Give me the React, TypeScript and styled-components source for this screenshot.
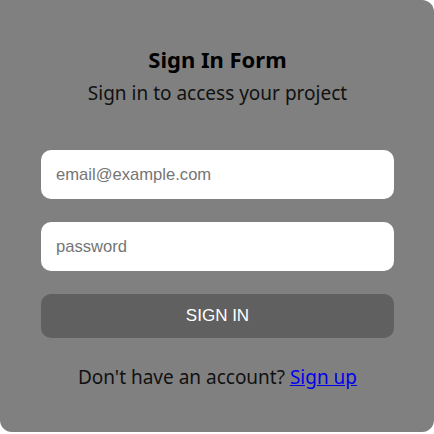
import React from "react";
import styled, { createGlobalStyle } from "styled-components";

const Global = createGlobalStyle`
  html, body { margin: 0; padding: 0; background: #ffffff; }
  * { box-sizing: border-box; }
`;

const Card = styled.div`
  width: 434px;
  height: 432px;
  background: #808080;
  border-radius: 0 12px 12px 12px;
  padding: 43px 40px 0 41px;
  display: flex;
  flex-direction: column;
  align-items: stretch;
  font-family: "Noto Sans", sans-serif;
`;

const Title = styled.h1`
  margin: 0;
  text-align: center;
  font-size: 22px;
  font-weight: 700;
  line-height: 32px;
  color: #000;
`;

const Subtitle = styled.p`
  margin: 4px 0 0;
  text-align: center;
  font-size: 19px;
  line-height: 28px;
  color: #111;
`;

const Form = styled.form`
  margin-top: 43px;
  display: flex;
  flex-direction: column;
  gap: 23px;
`;

const Input = styled.input`
  height: 49px;
  border: none;
  border-radius: 10px;
  background: #fff;
  padding: 0 15px;
  font-family: "Liberation Sans", Arial, sans-serif;
  font-size: 16.6px;
  color: #333;
  outline: none;
  &::placeholder { color: #757575; }
`;

const Button = styled.button`
  height: 44px;
  border: none;
  border-radius: 10px;
  background: #606060;
  color: #fff;
  font-family: "Liberation Sans", Arial, sans-serif;
  font-size: 17px;
  cursor: pointer;
`;

const Footer = styled.p`
  margin: 25px 0 0;
  text-align: center;
  font-size: 19px;
  line-height: 28px;
  color: #111;
`;

const Link = styled.a`
  color: #0000ee;
  text-decoration: underline;
`;

export default function App() {
  return (
    <>
      <Global />
      <Card>
        <Title>Sign In Form</Title>
        <Subtitle>Sign in to access your project</Subtitle>
        <Form onSubmit={(e) => e.preventDefault()}>
          <Input type="email" placeholder="email@example.com" />
          <Input type="password" placeholder="password" />
          <Button type="submit">SIGN IN</Button>
        </Form>
        <Footer>
          Don't have an account? <Link href="#">Sign up</Link>
        </Footer>
      </Card>
    </>
  );
}
